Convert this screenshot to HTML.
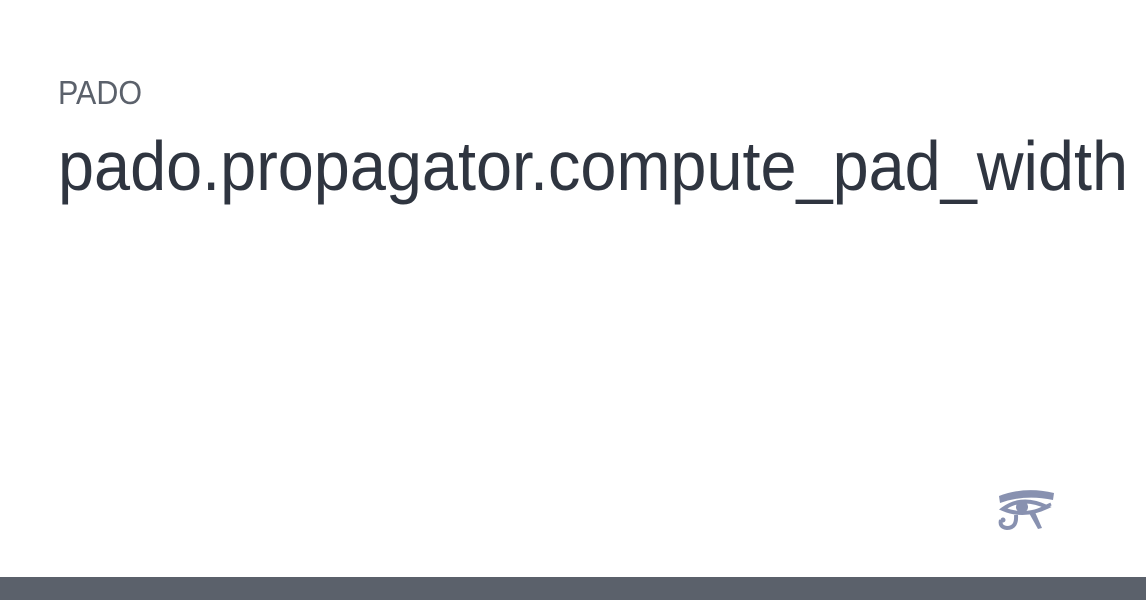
<!DOCTYPE html>
<html><head><style>
html,body{margin:0;padding:0;background:#fff;width:1146px;height:600px;overflow:hidden}
</style></head><body>
<svg width="1146" height="600" xmlns="http://www.w3.org/2000/svg">
<rect width="1146" height="600" fill="#fff"/>
<text x="58" y="104" font-family="Liberation Sans, sans-serif" font-size="33" fill="#5b616b" textLength="84" lengthAdjust="spacingAndGlyphs">PADO</text>
<text x="58" y="190" font-family="Liberation Sans, sans-serif" font-size="70" fill="#2f3540" textLength="1070" lengthAdjust="spacingAndGlyphs">pado.propagator.compute_pad_width</text>
<g fill="#8891b0" stroke="#8891b0">
<path d="M999 496 Q1025 486 1054 493 L1053 500 Q1025 494 1000 503 Z" stroke="none"/>
<path d="M1003 509 Q1022 495 1047 507 Q1024 518 1003 509 Z" fill="none" stroke-width="4"/>
<circle cx="1022" cy="507" r="6" stroke="none"/>
<path d="M1016 515 Q1017 528 1007 528 Q999 527 1001 520" fill="none" stroke-width="4"/>
<circle cx="1003" cy="520" r="2.5" stroke="none"/>
<path d="M1029 513 L1038 529 L1042 528 L1035 512 Z" stroke="none"/>
<path d="M1034 512 L1051 504" fill="none" stroke-width="3"/>
</g>
<rect x="0" y="577" width="1146" height="23" fill="#5b616b"/>
</svg>
</body></html>
